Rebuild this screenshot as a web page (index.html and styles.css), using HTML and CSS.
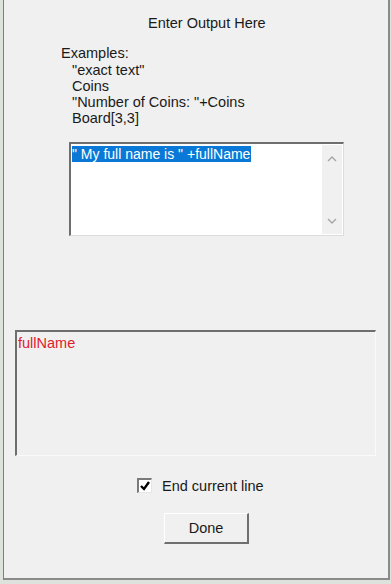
FILE: index.html
```html
<!DOCTYPE html>
<html>
<head>
<meta charset="utf-8">
<link rel="stylesheet" href="styles.css">
</head>
<body>
<div class="backdrop">
  <div class="dialog">
    <div class="title">Enter Output Here</div>
    <div class="examples">
      <div>Examples:</div>
      <div class="ex">"exact text"</div>
      <div class="ex">Coins</div>
      <div class="ex">"Number of Coins: "+Coins</div>
      <div class="ex">Board[3,3]</div>
    </div>
    <div class="editor">
      <div class="editor-text"><span class="sel">" My full name is " +fullName</span></div>
      <div class="scrollbar">
        <svg class="arrow" width="10" height="7" viewBox="0 0 10 7"><path d="M1 6 L5 2 L9 6" fill="none" stroke="#a6a6a6" stroke-width="1.4"/></svg>
        <svg class="arrow" width="10" height="7" viewBox="0 0 10 7"><path d="M1 1 L5 5 L9 1" fill="none" stroke="#a6a6a6" stroke-width="1.4"/></svg>
      </div>
    </div>
    <div class="preview"><span class="var">fullName</span></div>
    <div class="check-row">
      <span class="checkbox"><svg width="12" height="12" viewBox="0 0 12 12"><path d="M2 6 L5 9 L10 2" fill="none" stroke="#000" stroke-width="2.4"/></svg></span>
      <span class="check-label">End current line</span>
    </div>
    <div class="button">Done</div>
  </div>
</div>
</body>
</html>
```
FILE: styles.css
```css
html, body {
  margin: 0;
  padding: 0;
}
body {
  width: 391px;
  height: 584px;
  overflow: hidden;
  background: #dde3dc;
  font-family: "Liberation Sans", Arial, sans-serif;
  font-size: 14.5px;
  color: #1a1a1a;
}
.backdrop {
  padding-left: 3px;
  height: 584px;
  box-sizing: border-box;
}
.dialog {
  width: 387px;
  height: 580px;
  box-sizing: border-box;
  background: #f0f0f0;
  border-left: 1px solid #7f7f7f;
  border-right: 2px solid #8a8a8a;
  border-bottom: 2px solid #8a8a8a;
  display: flex;
  flex-direction: column;
  align-items: flex-start;
  line-height: 16.3px;
}
.title {
  margin-top: 15px;
  margin-left: 144px;
}
.examples {
  margin-top: 14px;
  margin-left: 57px;
}
.ex {
  padding-left: 11px;
}
.editor {
  margin-top: 15px;
  margin-left: 65px;
  width: 275px;
  height: 94px;
  box-sizing: border-box;
  background: #fff;
  border-top: 2px solid #6e6e6e;
  border-left: 2px solid #6e6e6e;
  border-right: 1px solid #dcdcdc;
  border-bottom: 1px solid #dcdcdc;
  display: flex;
}
.editor-text {
  flex: 1;
  padding: 2px 0 0 1px;
  font-size: 14px;
}
.sel {
  background: #0a78d6;
  color: #fff;
  padding: 0 1px 0 0;
}
.scrollbar {
  width: 20px;
  margin: 1px 1px 1px 0;
  background: #f0f0f0;
  display: flex;
  flex-direction: column;
  justify-content: space-between;
  align-items: center;
  padding: 10px 0 9px;
  box-sizing: border-box;
}
.arrow {
  display: block;
}
.preview {
  margin-top: 94px;
  margin-left: 11px;
  width: 361px;
  height: 126px;
  box-sizing: border-box;
  background: #f0f0f0;
  border-top: 2px solid #6e6e6e;
  border-left: 2px solid #6e6e6e;
  border-right: 1px solid #fafafa;
  border-bottom: 1px solid #fafafa;
  padding: 3px 0 0 1px;
}
.var {
  color: #e0202a;
}
.check-row {
  margin-top: 22px;
  margin-left: 133px;
  display: flex;
  align-items: center;
}
.checkbox {
  width: 15px;
  height: 15px;
  box-sizing: border-box;
  background: #fff;
  border-top: 2px solid #7a7a7a;
  border-left: 2px solid #7a7a7a;
  border-right: 1px solid #e6e6e6;
  border-bottom: 1px solid #e6e6e6;
  display: flex;
  align-items: center;
  justify-content: center;
}
.checkbox svg {
  display: block;
}
.check-label {
  margin-left: 10px;
}
.button {
  margin-top: 19px;
  margin-left: 160px;
  width: 85px;
  height: 31px;
  box-sizing: border-box;
  border-top: 1px solid #ffffff;
  border-left: 1px solid #ffffff;
  border-right: 2px solid #6f6f6f;
  border-bottom: 2px solid #6f6f6f;
  background: #f0f0f0;
  display: flex;
  align-items: center;
  justify-content: center;
}
```
